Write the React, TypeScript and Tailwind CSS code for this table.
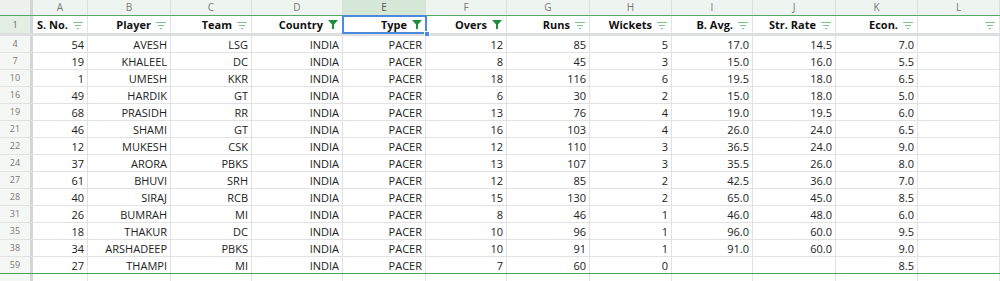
import React from "react";

const GRID =
  "grid grid-cols-[33px_55px_83px_81px_91px_83px_81px_83px_82px_81px_83px_82px_1fr]";

const letters = ["A", "B", "C", "D", "E", "F", "G", "H", "I", "J", "K", "L"];
const headers: [string, boolean][] = [
  ["S. No.", false],
  ["Player", false],
  ["Team", false],
  ["Country", true],
  ["Type", true],
  ["Overs", true],
  ["Runs", false],
  ["Wickets", false],
  ["B. Avg.", false],
  ["Str. Rate", false],
  ["Econ.", false],
  ["", false],
];

const rows: [number, string[]][] = [
  [4, ["54", "AVESH", "LSG", "INDIA", "PACER", "12", "85", "5", "17.0", "14.5", "7.0", ""]],
  [7, ["19", "KHALEEL", "DC", "INDIA", "PACER", "8", "45", "3", "15.0", "16.0", "5.5", ""]],
  [10, ["1", "UMESH", "KKR", "INDIA", "PACER", "18", "116", "6", "19.5", "18.0", "6.5", ""]],
  [16, ["49", "HARDIK", "GT", "INDIA", "PACER", "6", "30", "2", "15.0", "18.0", "5.0", ""]],
  [19, ["68", "PRASIDH", "RR", "INDIA", "PACER", "13", "76", "4", "19.0", "19.5", "6.0", ""]],
  [21, ["46", "SHAMI", "GT", "INDIA", "PACER", "16", "103", "4", "26.0", "24.0", "6.5", ""]],
  [22, ["12", "MUKESH", "CSK", "INDIA", "PACER", "12", "110", "3", "36.5", "24.0", "9.0", ""]],
  [24, ["37", "ARORA", "PBKS", "INDIA", "PACER", "13", "107", "3", "35.5", "26.0", "8.0", ""]],
  [27, ["61", "BHUVI", "SRH", "INDIA", "PACER", "12", "85", "2", "42.5", "36.0", "7.0", ""]],
  [28, ["40", "SIRAJ", "RCB", "INDIA", "PACER", "15", "130", "2", "65.0", "45.0", "8.5", ""]],
  [31, ["26", "BUMRAH", "MI", "INDIA", "PACER", "8", "46", "1", "46.0", "48.0", "6.0", ""]],
  [35, ["18", "THAKUR", "DC", "INDIA", "PACER", "10", "96", "1", "96.0", "60.0", "9.5", ""]],
  [38, ["34", "ARSHADEEP", "PBKS", "INDIA", "PACER", "10", "91", "1", "91.0", "60.0", "9.0", ""]],
  [59, ["27", "THAMPI", "MI", "INDIA", "PACER", "7", "60", "0", "", "", "8.5", ""]],
];

function FilterLines() {
  return (
    <svg width="10" height="8" viewBox="0 0 10 8" className="shrink-0">
      <rect x="0" y="1" width="10" height="1" fill="#7cc28b" />
      <rect x="2" y="4" width="6" height="1" fill="#7cc28b" />
      <rect x="4" y="7" width="2" height="1" fill="#7cc28b" />
    </svg>
  );
}

function FilterSolid() {
  return (
    <svg width="10" height="9" viewBox="0 0 10 9" className="shrink-0">
      <path d="M0 0 H10 L6 4.5 V9 H4 V4.5 Z" fill="#1e8e3e" />
    </svg>
  );
}

export default function App() {
  return (
    <div
      className="w-[1000px] h-[281px] overflow-hidden bg-white text-[11px] text-[#222]"
      style={{ fontFamily: '"Open Sans", "Liberation Sans", sans-serif' }}
    >
      {/* column letters */}
      <div className={`${GRID} h-[16px] border-b border-[#55a865] bg-[#eef4ef]`}>
        <div className="border-r-[3px] border-[#d3d6d4] bg-[#eef1ee]" />
        {letters.map((l, i) => (
          <div
            key={l}
            className={`flex items-center justify-center border-r border-[#d9e2da] text-[10px] text-[#7a7a7a] ${
              i === 4 ? "bg-[#d5e8d8] text-[#555]" : ""
            }`}
          >
            {l}
          </div>
        ))}
      </div>
      {/* header row 1 */}
      <div className={`${GRID} h-[17px]`}>
        <div className="flex items-center justify-center border-r-[3px] border-[#d3d6d4] bg-[#e3eee5] text-[9px] text-[#666]">
          1
        </div>
        {headers.map(([h, filtered], i) => (
          <div
            key={i}
            className={`relative flex items-center justify-end gap-[5px] pr-[4px] font-bold text-[#111] ${
              i === 4 ? "" : "border-r border-[#e2e2e2]"
            }`}
          >
            {h && <span className="whitespace-nowrap leading-none">{h}</span>}
            {filtered ? <FilterSolid /> : <FilterLines />}
            {i === 4 && (
              <>
                <div className="pointer-events-none absolute inset-x-[-1px] top-[-1px] bottom-[-1px] border-2 border-[#4a89dc]" />
                <div className="absolute right-[-4px] bottom-[-4px] h-[6px] w-[6px] border border-white bg-[#4a89dc]" />
              </>
            )}
          </div>
        ))}
      </div>
      {/* frozen separator */}
      <div className="h-[3px] bg-[#dcdedf]" />
      {/* data rows */}
      {rows.map(([n, cells], ri) => (
        <div
          key={n}
          className={`${GRID} h-[17px] border-b ${
            ri === rows.length - 1 ? "border-[#4aa35c]" : "border-[#e2e2e2]"
          }`}
        >
          <div className="flex items-center justify-center border-r-[3px] border-[#d3d6d4] bg-[#f5f7f5] text-[9px] text-[#777]">
            {n}
          </div>
          {cells.map((c, i) => (
            <div
              key={i}
              className="flex items-center justify-end border-r border-[#e2e2e2] pr-[3px] leading-none whitespace-nowrap"
            >
              {c}
            </div>
          ))}
        </div>
      ))}
      <div className={`${GRID} h-[17px]`}>
        <div className="border-r-[3px] border-[#d3d6d4] bg-[#f5f7f5]" />
        {letters.map((l) => (
          <div key={l} className="border-r border-[#e2e2e2]" />
        ))}
      </div>
    </div>
  );
}
